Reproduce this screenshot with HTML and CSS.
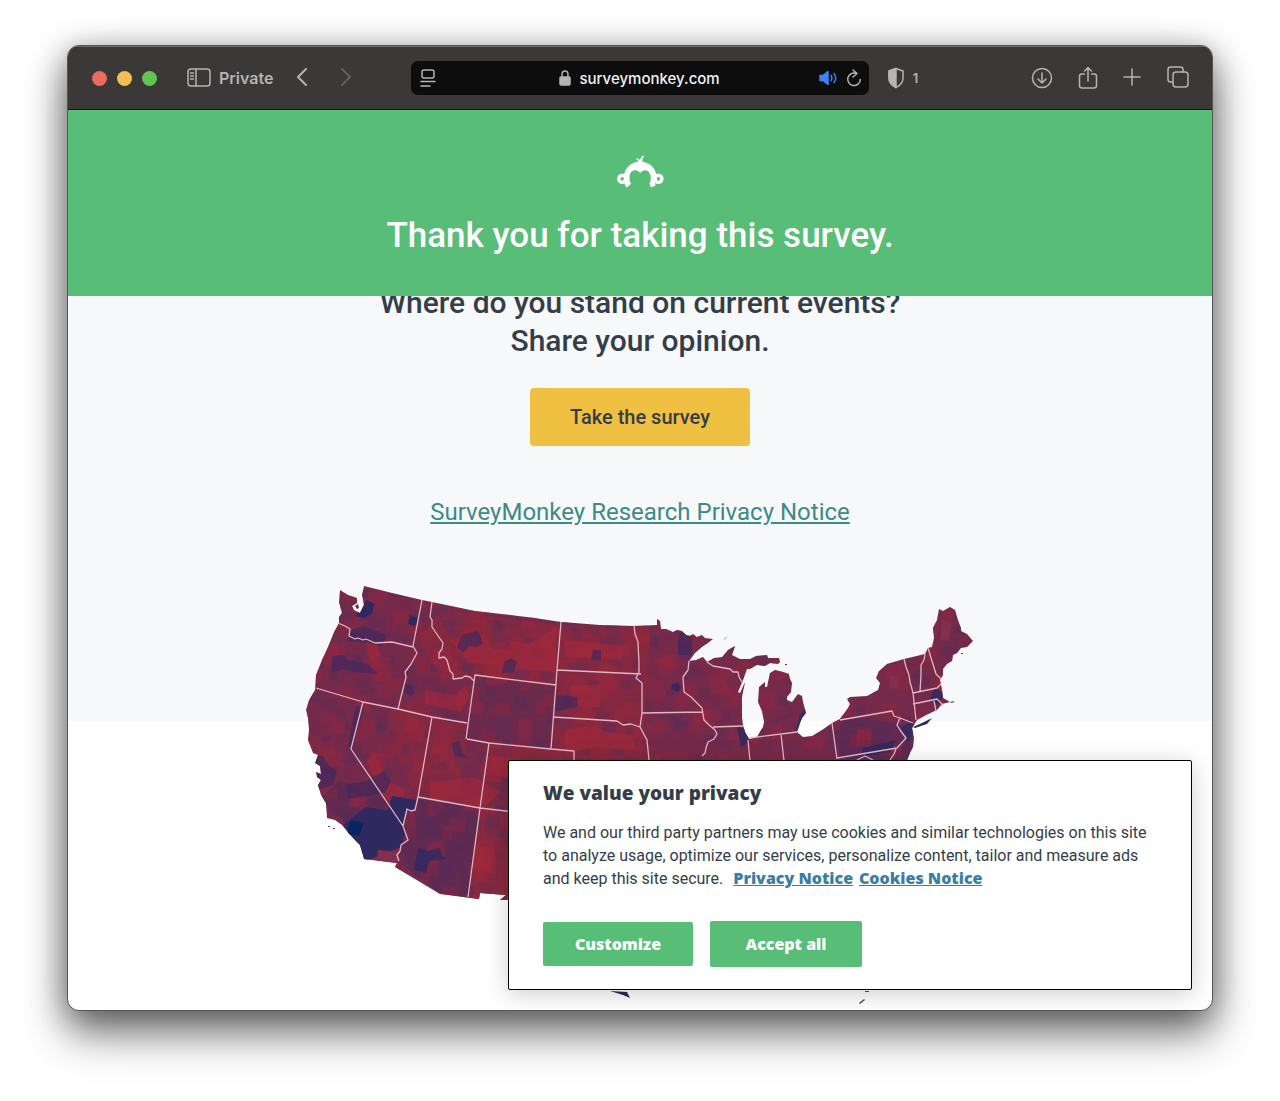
FILE: index.html
```html
<!DOCTYPE html>
<html lang="en">
<head>
    <meta charset="UTF-8">
    <meta name="viewport" content="width=device-width, initial-scale=1.0">
    <title>Thank you for taking this survey.</title>
    <link rel="stylesheet" href="styles.css">
</head>
<body>
    <div class="window">
        <!-- Toolbar -->
        <header class="toolbar">
            <div class="toolbar-left">
                <div class="lights">
                    <button class="light red" aria-label="Close"></button>
                    <button class="light yellow" aria-label="Minimize"></button>
                    <button class="light green" aria-label="Zoom"></button>
                </div>
                <button class="tool sidebar-btn">
                    <svg width="24" height="20" viewBox="0 0 24 20"><rect x="1" y="1" width="22" height="17" rx="3"/><path d="M9 1v17M3.500 5h3M3.500 8h3M3.500 11h3"/></svg>
                    <span>Private</span>
                </button>
                <button class="tool back" aria-label="Back"><svg width="12" height="20" viewBox="0 0 12 20"><path class="thick" d="M10 1L2 9l8 8"/></svg></button>
                <button class="tool forward" aria-label="Forward"><svg width="12" height="20" viewBox="0 0 12 20"><path class="thick" d="M2 1l8 8-8 8"/></svg></button>
            </div>
            <div class="address">
                <button class="tool" aria-label="Page menu"><svg width="16" height="20" viewBox="0 0 16 20"><rect x="2" y="2" width="12" height="8" rx="2"/><path d="M1 13.500h14M1 18h9"/></svg></button>
                <label class="url">
                    <svg width="12" height="16" viewBox="0 0 12 16" aria-label="Secure"><rect class="fill" x="1" y="7" width="10" height="8" rx="1"/><path d="M3 8V4.500a3 3.500 0 0 1 6 0V8"/></svg>
                    <input type="text" class="url-input" value="surveymonkey.com" aria-label="Address">
                </label>
                <button class="tool sound" aria-label="Mute"><svg width="18" height="16" viewBox="0 0 18 16"><path class="solid" d="M1 5.500h3l5-4v13l-5-4H1z"/><path d="M12 5.500q1.800 2.500 0 5M15 3.500q3.500 4.500 0 9"/></svg></button>
                <button class="tool" aria-label="Reload"><svg width="16" height="20" viewBox="0 0 16 20"><path d="M10.500 5.500A6.300 6.300 0 1 0 14.300 11.500M7 2l4 3.500L7 9"/></svg></button>
            </div>
            <div class="toolbar-right">
                <button class="tool shield" aria-label="Privacy report">
                    <svg width="18" height="22" viewBox="0 0 18 22"><path d="M9 1.500l7 2.500v7q0 6-7 9.500-7-3.500-7-9.500v-7z"/><path class="fill" d="M9 1.500v19q-7-3.500-7-9.500v-7z"/></svg>
                    <span>1</span>
                </button>
                <div class="actions">
                    <button class="tool" aria-label="Downloads"><svg width="22" height="22" viewBox="0 0 22 22"><circle cx="11" cy="11" r="9.500"/><path d="M11 6v10M7 12l4 4 4-4"/></svg></button>
                    <button class="tool" aria-label="Share"><svg width="20" height="26" viewBox="0 0 20 26"><path d="M6.500 9H4q-2.500 0-2.500 2.500v9Q1.500 23 4 23h12q2.500 0 2.500-2.500v-9Q18.500 9 16 9h-2.500M10 16V3M6.500 6L10 2.500 13.500 6"/></svg></button>
                    <button class="tool" aria-label="New tab"><svg width="18" height="20" viewBox="0 0 18 20"><path d="M9 1v16M1 9h16"/></svg></button>
                    <button class="tool" aria-label="Show tabs"><svg width="24" height="26" viewBox="0 0 24 26"><rect x="7" y="7" width="15" height="15" rx="3"/><path d="M7 17H4.500Q2 17 2 14.500v-10Q2 2 4.500 2h10Q17 2 17 4.500V7"/></svg></button>
                </div>
            </div>
        </header>

        <!-- Banner -->
        <div class="banner">
            <svg class="logo" width="48" height="34" viewBox="0 0 48 34" role="img" aria-label="SurveyMonkey">
                <path fill-rule="evenodd" d="M1 23.800a5.200 5.200 0 1 0 10.400 0a5.200 5.200 0 1 0-10.400 0zM4.500 23.800a1.700 1.900 0 1 1 3.400 0a1.700 1.900 0 1 1-3.400 0zM37.200 23.800a5.200 5.200 0 1 0 10.400 0a5.200 5.200 0 1 0-10.400 0zM40.700 23.800a1.700 1.900 0 1 1 3.400 0a1.700 1.900 0 1 1-3.400 0z"/>
                <path d="M8 19.500C10 11.500 16.500 7 22.500 6.800Q22 4.500 19.500 3.700Q22.500 2.800 24 5Q24.700 1.500 28.500 0.300Q26.100 3 26.300 6.800C32.500 7.500 38.500 11.500 40.500 19.500L39 28L39.500 30.500L35 32.500L33.300 28.700Q35.300 26 34.800 22C34.300 18 32 15.300 29 15.300Q26 15.300 24.200 17.900Q22.500 15.300 19.500 15.300C16 15.300 13.700 18 13.500 22Q13.200 26 15.100 28.700L11 32.500L9 30.500Z"/>
            </svg>
            <h1>Thank you for taking this survey.</h1>
        </div>

        <!-- Survey invitation -->
        <section class="invite">
            <h2>Where do you stand on current events?<br>Share your opinion.</h2>
            <button class="survey-btn">Take the survey</button>
            <a href="#" class="research-link">SurveyMonkey Research Privacy Notice</a>
        </section>

        <svg class="map" viewBox="295 580 690 430" role="img" aria-label="County map of the United States">
            <defs>
                <pattern id="counties" width="79" height="67" patternUnits="userSpaceOnUse" patternTransform="rotate(6)">
                    <path fill="#9a2638" opacity=".35" d="M3 4h14v9h7v10H9v-8H3zM40 6h12v16h-7v7h-9V15h4zM60 30h15v12H63v9h-9V38h6zM14 44h13v12H8V50h6z"/>
                    <path fill="#4c2a5c" opacity=".3" d="M24 12h9v8h-9zM56 8h11v9H56zM31 34h12v8h6v7H35v-6h-4zM3 28h9v11H3zM66 54h10v8H66z"/>
                    <path fill="#69284f" opacity=".35" d="M15 24h15v9H15zM44 52h13v11H44zM68 16h9v12h-9zM27 56h8v9h-8z"/>
                </pattern>
                <pattern id="blocks" width="113" height="97" patternUnits="userSpaceOnUse" patternTransform="rotate(2)">
                    <path fill="#5a2a58" opacity=".35" d="M8 10l13-3 4 9 9 2-3 11-14-2-2-8-8-1zM62 20l15 2-2 11 8 3-4 9-17-4zM30 60l12-2 5 8-6 9-13-4zM88 66l14 3-3 12-12-3z"/>
                    <path fill="#a3263a" opacity=".35" d="M42 4l14 2-1 14-16-3zM92 20l12 2 2 16-15-2zM5 52l15-3 3 14-12 8-7-5zM58 60l17 2-4 14 6 8-18 2-5-14z"/>
                </pattern>
                <clipPath id="land"><path d="M364 586L392 593 422 600 475 611 535 618 561 622 600 625 634 626 657 625 657 619 660 621 661 629 666 629 673 632 677 630 682 631 686 635 690 636 693 634 697 637 702 635 705 638 713 639 708 643 702 647 695 653 689 661 696 660 703 657 707 662 714 658 722 657 728 650 735 646 732 655 740 659 750 659 756 656 767 655 768 658 779 658 780 662 778 664 770 663 765 666 757 665 750 669 747 669 743 680 738 692 740 693 745 682 742 697 742 717 743 725 745 732 749 739 757 737 761 730 763 727 764 722 762 711 758 702 759 687 765 682 765 687 767 687 770 673 775 670 783 672 789 674 790 679 792 683 791 692 787 697 787 700 792 702 798 694 802 696 803 702 806 713 802 718 800 723 797 732 803 737 812 736 822 730 832 723 840 719 848 708 850 704 847 699 850 697 867 696 878 690 880 683 876 678 879 671 887 664 904 659 925 654 928 648 932 647 934 638 933 628 937 620 939 609 943 611 950 607 955 610 958 620 961 628 961 631 967 634 973 641 967 647 961 648 957 653 953 655 952 661 947 664 943 669 943 675 940 680 942 690 943 698 950 702 942 704 937 710 926 715 917 720 912 728 914 738 913 747 910 753 907 760 900 810 860 850 830 900 500 900 506 895 480 893 479 899 440 894 395 867 397 863 364 859 360 845 350 835 342 825 335 820 327 818 326 803 321 795 318 785 321 780 317 777 316 772 321 774 320 766 315 763 318 755 313 753 308 740 309 730 308 718 306 710 309 700 315 690 316 675 322 660 328 647 334 632 339 623 339 617 342 613 339 602 340 590 348 595 357 598 357 603 352 606 354 610 360 613 364 605 362 595Z"/></clipPath>
            </defs>
            <g clip-path="url(#land)">
                <rect x="295" y="580" width="690" height="430" fill="#762a4a"/>
                <path fill="#862940" d="M440 610l120 15 90 4-8 130H560l-20-70-100-12-20-35zM395 700l75 25-12 70-45-5-30-60zM470 810h40v90h-40zM485 745h90v30h-90z"/>
                <path fill="#6a2a4c" d="M475 677l80 9-6 62-82-10z"/>
                <path fill="#5f2a52" d="M418 799l61 9-10 90-30-5-42-32 8-50zM340 780l45 20 15 40-30 8-50-50zM840 715l70 10v40h-70z"/>
                <rect x="295" y="580" width="690" height="430" fill="url(#counties)"/>
                <rect x="295" y="580" width="690" height="430" fill="url(#blocks)"/>
                <path fill="#a3283a" opacity=".65" d="M450 640l35-5 8 14 40 2-4 15-60-3zM500 655l50-20v35h-50zM508 640l20 4 22-14 6-6v50l-12-6-20 2zM565 640l60 6-4 14-56-3zM565 730l30-5 8 6 28 4 6 16-40-4-32 6zM425 690l30 5 10-10 5 12-10 15-35-8zM375 755l10 25 20 10-5 20-18-15-15-35zM430 782l45-5 25 15-15 15-55-8zM365 640l12 2 3 14-10 5zM475 845l20 3-5 25-18-5zM570 685h30v22h-28zM490 755l40 5-12 20-25-5z"/>
                <path fill="#40285e" opacity=".7" d="M350 630l14-4 22 9-3 12-14-4-21-2zM332 656l12-1 4 5 20 4 10 10-24-2-10-3-12 3zM462 635l16-4 5 12-6 4-8-1-6 7-6-6zM504 662l7-4 6 4-3 10-12 1zM356 705l8 3-12 42-4-5zM405 684l7 1 3 8-4 3-7-4zM452 743l7-2 4 12 3 5-12-2zM345 785l20-4 20-10 6 10-6 12-36 6zM315 755l8 1 6 10 8 4-4 15-15 5zM680 632l12 3v20h-14v-14zM555 695l22 2 1 10-22 4zM593 650h8v10h-10z"/>
                <path fill="#302960" d="M367 600l8 4-3 10-8 4-8-2 6-10zM410 615l8 3-3 8-7-2zM392 796l24 4-2 10-8 2-3 16-15-18zM366 807l26 4 14 18-5 18-36 14-6-16-16-20z"/>
                <path fill="#302960" opacity=".85" d="M418 847l10 4 12-3 2 8 5 3-18 2-3 12-12-3zM737 727l9 2 4 12-9 6zM672 684l6-2 3 6-3 4-7-3zM800 714l6-6-3 24-7-2zM935 688l10 5-7 12-8-6zM901 728l11-8 4 10-8 12zM862 748l34-8-6 12-28 5z"/>
                <path fill="#082660" d="M350 820l14 3-5 13-12-2z"/>
                <path fill="#82304c" d="M378 850l22 2-3 14-20-5zM942 620l10 3-3 18-9-2zM890 675l9 2-1 12-9-2z"/>
            </g>
            <path class="state" d="M338 623l7 3 5 3-1 7 6 3 3-1 5 2 3-1 9 4 17-1 21 5M422 600l-9 46 4 7-6 11-6 8 1 5-8 32M432 602l-2 15 2 3v7l11 16-1 6-3 4v5l5-1 3 3 3 11 3 3v5l9-1 3-2 5 1 4 4M466 739l9-64 81 10M561 622l-4 48-6 79M557 670l84 4M553 717l64 4 6 4 8-1 9 3M467 739l22 4 62 6 23 2v10M316 688l47 14 35 7 34 8 35 6M363 702l-12 47 52 77 5 14-7 5-1 6-3 4 2 6M432 717l-14 80-3 13-4 1-4-2-4 17M418 797l62 11 34 4M489 743l-9 65-12 89M634 625l1 9 3 8 1 21v9l-3 6 6 5v30l-2 14 7 13 2 20M642 713l61-1M689 661l-1 9-5 7 1 15 7 5 11 11 2 12 5 5 6 5 2 4-3 5-6 3-2 6-1 5-3 3M707 662l6 4 17 3 3 3 5 0 1 5 3 5M713 727l30-1M748 740l2 21M750 738l47-6M781 734l3 27M832 723l5 36M840 720l52-9 2 5 6 2 13 5M900 718l-3 7 3 5 6 8-9 10-60 10M904 659l2 8 3 8 1 7 3 11 3 27M925 654l-1 6-3 5v10l-1 17M913 693l24-5 4-4M928 648l8 26 5 5M913 704l24-5 6 6M934 701l2 10M857 760l8-4 8 4M890 760l4-6 2-5"/>
            <path fill="#33285c" d="M913 727l11-5 8-4-5 6-12 4zM610 991l17 1 3 6-7-3zM950 702l5-1-3 2z"/>
            <path fill="#6b4050" d="M865 991h4v1h-4zM859 1003l5-4 1 1-5 4z"/>
            <path fill="#7a2a49" d="M723 640l5-4-3 3zM355 606l3-2 1 4-2 1zM328 826h2v1h-2zM333 828h2v1h-2zM961 653h2v1h-2zM785 664h2v1h-2z"/>
        </svg>

        <!-- Cookie notice -->
        <div class="privacy" role="dialog" aria-labelledby="privacyTitle">
            <h3 id="privacyTitle">We value your privacy</h3>
            <p>We and our third party partners may use cookies and similar technologies on this site to analyze usage, optimize our services, personalize content, tailor and measure ads and keep this site secure. <a href="#">Privacy Notice</a> <a href="#">Cookies Notice</a></p>
            <div class="privacy-actions">
                <button class="customize-btn">Customize</button>
                <button class="accept-btn">Accept all</button>
            </div>
        </div>
    </div>
</body>
</html>
```
FILE: styles.css
```css
* {
    margin: 0;
    padding: 0;
    box-sizing: border-box;
}
body {
    font-family: Roboto, "Liberation Sans", sans-serif;
    background-color: white;
    color: #333e48;
    padding: 45px 67px 89px;
}
button {
    font-family: inherit;
    border: none;
    cursor: pointer;
}
.window {
    position: relative;
    overflow: hidden;
    background-color: white;
    border: 1px solid #555;
    border-radius: 12px;
    box-shadow: 0 22px 44px rgba(0,0,0,0.55), 0 4px 30px rgba(0,0,0,0.3);
}

/* Toolbar */
.toolbar {
    display: flex;
    align-items: center;
    height: 64px;
    background-color: #3a3937;
    border-top: 1px solid #6b6b6a;
    border-bottom: 1px solid #161616;
    font-family: Inter, "Liberation Sans", sans-serif;
    color: #b5b4b2;
}
.toolbar-left, .toolbar-right {
    width: 30%;
    display: flex;
    align-items: center;
}
.toolbar-left {
    padding-left: 24px;
}
.lights {
    display: flex;
    gap: 10px;
}
.light {
    width: 15px;
    height: 15px;
    border-radius: 50%;
}
.red {
    background-color: #ed6a5f;
}
.yellow {
    background-color: #f5bf4f;
}
.green {
    background-color: #61c554;
}
.tool {
    display: flex;
    align-items: center;
    gap: 8px;
    background: none;
    color: inherit;
    font-size: 16px;
    font-weight: 600;
}
.tool svg, .url svg {
    display: block;
    fill: none;
    stroke: currentColor;
    stroke-width: 1.5;
    stroke-linecap: round;
    stroke-linejoin: round;
}
.tool .thick {
    stroke-width: 2;
}
.tool .fill, .tool .solid, .url .fill {
    fill: currentColor;
}
.sidebar-btn {
    margin-left: 30px;
}
.back {
    margin-left: 23px;
}
.forward {
    margin-left: 32px;
    color: #62615f;
}
.address {
    display: flex;
    align-items: center;
    gap: 9px;
    width: 40%;
    height: 34px;
    padding: 0 7px 0 9px;
    background-color: #0d0d0d;
    border-radius: 7px;
}
.url {
    flex: 1;
    display: flex;
    align-items: center;
    justify-content: center;
    gap: 8px;
    padding-left: 28px;
}
.url-input {
    width: 144px;
    border: none;
    outline: none;
    background: none;
    color: #f2f2f2;
    font-family: inherit;
    font-size: 15px;
    font-weight: 500;
}
.sound {
    color: #3b82f6;
}
.toolbar-right {
    justify-content: space-between;
    padding: 0 22px 0 18px;
}
.shield {
    font-size: 13px;
}
.actions {
    display: flex;
    align-items: center;
    gap: 25px;
}

/* Banner */
.banner {
    position: relative;
    z-index: 1;
    display: flex;
    flex-direction: column;
    align-items: center;
    gap: 24px;
    padding: 45px 20px 37px;
    background-color: #58bd77;
    color: white;
}
.logo {
    fill: white;
}
h1 {
    font-size: 35px;
    font-weight: 500;
    line-height: 46px;
}

/* Survey invitation */
.invite {
    display: flex;
    flex-direction: column;
    align-items: center;
    margin-top: -12px;
    padding-bottom: 191px;
    background-color: #f7f8fa;
    text-align: center;
}
h2 {
    font-size: 30px;
    font-weight: 500;
    line-height: 38px;
}
.survey-btn {
    margin-top: 28px;
    height: 58px;
    padding: 0 40px;
    background-color: #efc041;
    border-radius: 4px;
    color: #333e48;
    font-size: 20px;
    font-weight: 500;
}
.research-link {
    margin-top: 48px;
    color: #3c8a88;
    font-size: 24px;
    line-height: 36px;
}
.map {
    position: relative;
    display: block;
    width: 690px;
    max-width: 100%;
    margin: -141px auto 0;
}
.state {
    fill: none;
    stroke: #e0b6c2;
    stroke-width: 1.3;
    stroke-linejoin: round;
}

/* Cookie notice */
.privacy {
    position: absolute;
    right: 20px;
    bottom: 20px;
    width: 684px;
    max-width: 90%;
    padding: 18px 34px 22px;
    background-color: white;
    border: 1px solid black;
    border-radius: 2px;
    box-shadow: 0 4px 24px rgba(0,0,0,0.2);
}
h3 {
    font-family: "Open Sans", "Noto Sans", sans-serif;
    font-size: 19px;
    font-weight: 800;
    line-height: 28px;
}
.privacy p {
    margin-top: 14px;
    font-size: 16px;
    line-height: 23px;
}
.privacy p a {
    display: inline-block;
    margin-left: 2px;
    color: #3a7da7;
    font-family: "Open Sans", "Noto Sans", sans-serif;
    font-weight: 800;
    line-height: 20px;
}
.privacy p a:first-child {
    margin-left: 6px;
}
.privacy-actions {
    display: flex;
    align-items: center;
    gap: 17px;
    margin-top: 31px;
}
.privacy-actions button {
    background-color: #58bd77;
    border-radius: 2px;
    color: white;
    font-family: "Open Sans", "Noto Sans", sans-serif;
    font-size: 16px;
    font-weight: 800;
}
.customize-btn {
    width: 150px;
    height: 44px;
}
.accept-btn {
    width: 152px;
    height: 46px;
}
```
